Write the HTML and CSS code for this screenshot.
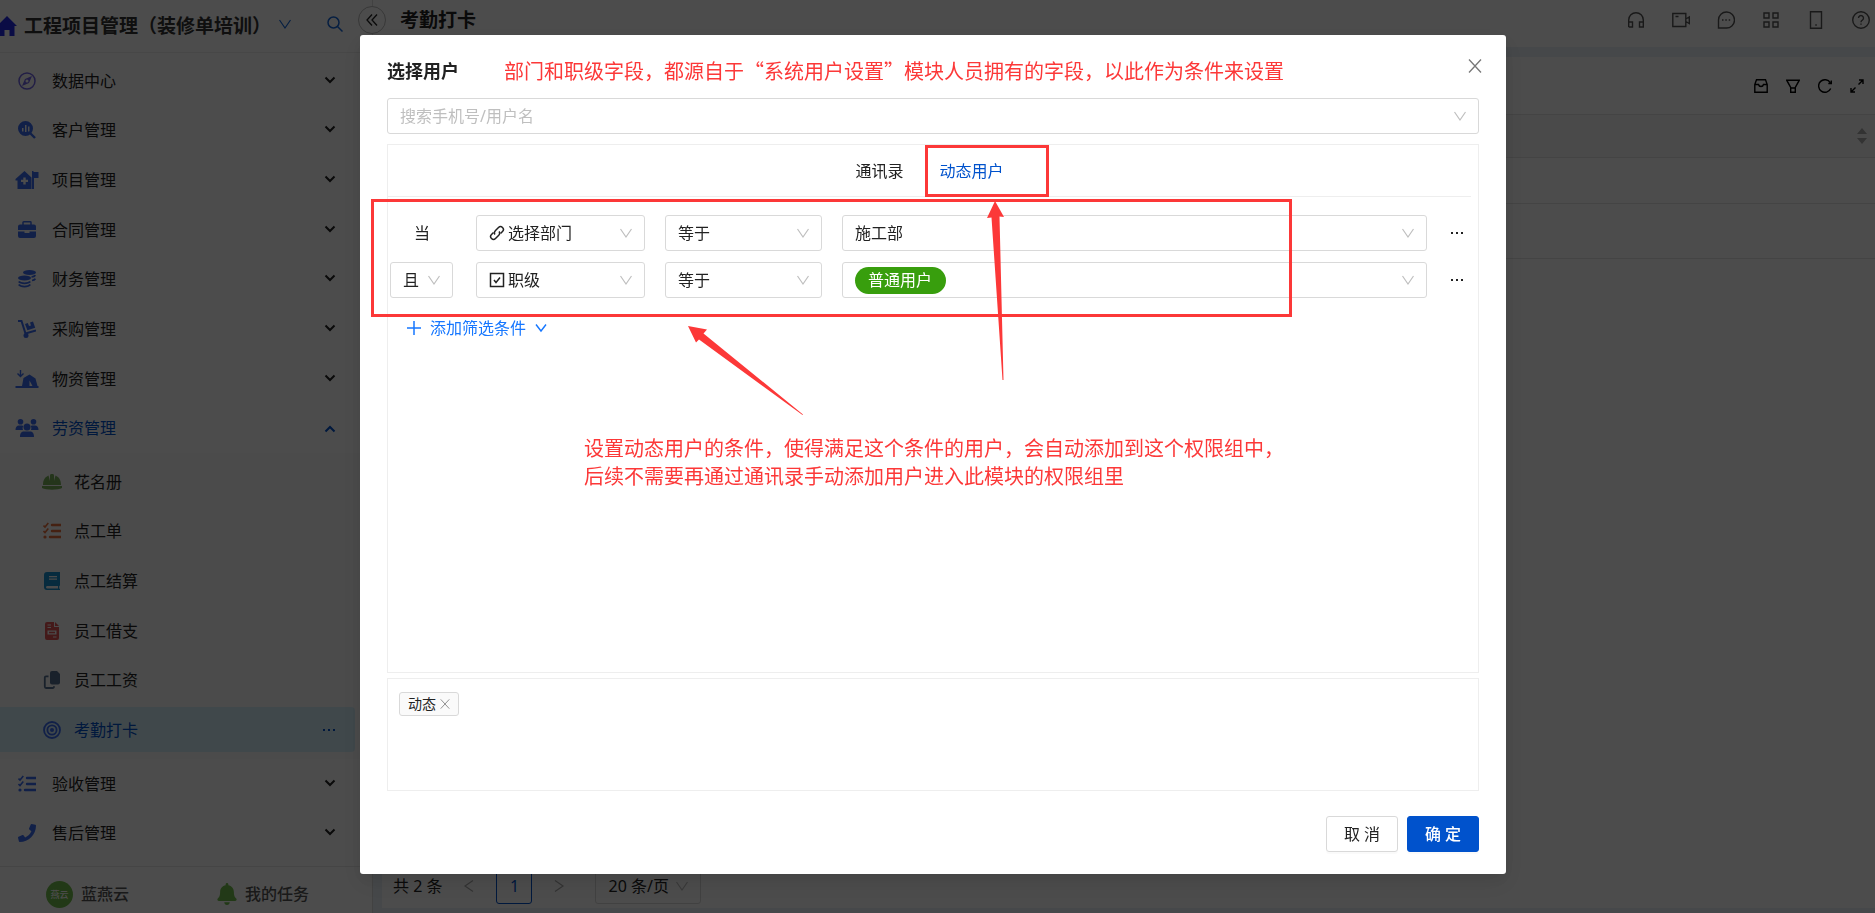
FILE: index.html
```html
<!DOCTYPE html>
<html lang="zh-CN">
<head>
    <meta charset="UTF-8">
    <meta name="viewport" content="width=device-width, initial-scale=1.0">
    <title>考勤打卡</title>
    <link rel="stylesheet" href="styles.css">
</head>
<body>
    <!-- Shared icons -->
    <svg class="sprite" aria-hidden="true">
        <symbol id="down" viewBox="0 0 14 14"><path d="M1.5 3L7 11l5.500-8" fill="none" stroke="currentColor" stroke-width="1.200"/></symbol>
        <symbol id="caret" viewBox="0 0 12 12"><path d="M1.500 2.500L6 7l4.500-4.500" fill="none" stroke="currentColor" stroke-width="2"/></symbol>
        <symbol id="close" viewBox="0 0 14 14"><path d="M1 .5l12 13M13 .5l-12 13" fill="none" stroke="currentColor" stroke-width="1.300"/></symbol>
        <symbol id="dots" viewBox="0 0 14 14"><path d="M1 6h2v2H1zM6 6h2v2H6zM11 6h2v2h-2z" fill="currentColor"/></symbol>
        <symbol id="tasks" viewBox="0 0 18 18"><g fill="none" stroke="currentColor"><path d="M.5 3.500L2 5l3.300-4M.5 9L2 10.500l3.300-4" stroke-width="1.600"/><path d="M9 3h8.500M9 9h8.500M7 15h10.500" stroke-width="2.400" stroke-linecap="round"/></g><circle cx="2" cy="15" r="1.600" fill="currentColor"/></symbol>
    </svg>

    <div class="app">
        <!-- Sidebar -->
        <aside class="sidebar">
            <div class="sidebar-header">
                <svg class="home" viewBox="0 0 20 20"><path d="M10 0l10 10h-2.500v10h-5v-6h-5v6h-5V10H0z" fill="currentColor"/></svg>
                <h1>工程项目管理（装修单培训）</h1>
                <button class="icon-btn project" aria-label="切换项目"><svg class="i14"><use href="#down"/></svg></button>
                <button class="icon-btn search" aria-label="搜索"><svg class="i16" viewBox="0 0 16 16" fill="none" stroke="currentColor" stroke-width="1.500"><circle cx="6.500" cy="6.500" r="5.500"/><path d="M10.500 10.500L15.500 15.500"/></svg></button>
            </div>
            <ul class="menu">
                <li>
                    <a href="#" class="item">
                        <svg class="icon purple" viewBox="0 0 18 18"><circle cx="9" cy="9" r="8" fill="none" stroke="currentColor" stroke-width="1.500"/><path fill-rule="evenodd" d="M14 4l-3 7-7 3 3-7zM9 7.500a1.500 1.500 0 1 0 0 3 1.500 1.500 0 0 0 0-3z" fill="currentColor"/></svg>
                        <span>数据中心</span><svg class="i12"><use href="#caret"/></svg>
                    </a>
                </li>
                <li>
                    <a href="#" class="item">
                        <svg class="icon" viewBox="0 0 18 18"><path d="M11 11l6 6" stroke="currentColor" stroke-width="2.400"/><path fill-rule="evenodd" d="M7.500 0a7.500 7.500 0 1 0 0 15 7.500 7.500 0 0 0 0-15zM4 7h1.500v3.500H4zM7 4h1.500v7H7zM10 5.500h1.500v5H10z" fill="currentColor"/></svg>
                        <span>客户管理</span><svg class="i12"><use href="#caret"/></svg>
                    </a>
                </li>
                <li>
                    <a href="#" class="item">
                        <svg class="icon wide" viewBox="0 0 23 18"><path fill-rule="evenodd" d="M9 0l7 6.500V18H2V9.500H0V8zM7.800 6.500v2.200H5.500v2.400h2.300v2.300h2.400v-2.300h2.300V8.700h-2.300V6.500zM16.500 0h1.500v1h5v6h-4.500v11h-2z" fill="currentColor"/></svg>
                        <span>项目管理</span><svg class="i12"><use href="#caret"/></svg>
                    </a>
                </li>
                <li>
                    <a href="#" class="item">
                        <svg class="icon" viewBox="0 0 18 18"><path d="M5 4V1.500Q5 .8 5.700.8h6.600q.7 0 .7.700V4" fill="none" stroke="currentColor" stroke-width="1.500"/><path d="M2 3.500h14a2 2 0 0 1 2 2V9H0V5.500a2 2 0 0 1 2-2zM0 10.500h6.500v1.500h5v-1.500H18V15a2 2 0 0 1-2 2H2a2 2 0 0 1-2-2z" fill="currentColor"/></svg>
                        <span>合同管理</span><svg class="i12"><use href="#caret"/></svg>
                    </a>
                </li>
                <li>
                    <a href="#" class="item">
                        <svg class="icon" viewBox="0 0 18 18"><g fill="currentColor"><ellipse cx="11.500" cy="2.500" rx="6.500" ry="2.500"/><ellipse cx="6.500" cy="8" rx="6.500" ry="2.600"/></g><path d="M.7 11.500c2 2.400 9.600 2.400 11.600 0M.7 14.500c2 2.800 9.600 2.800 11.600 0M13.500 7q3-.4 3.800-1.800M14 10.500q2.600-.4 3.300-1.800" fill="none" stroke="currentColor" stroke-width="1.700"/></svg>
                        <span>财务管理</span><svg class="i12"><use href="#caret"/></svg>
                    </a>
                </li>
                <li>
                    <a href="#" class="item">
                        <svg class="icon" viewBox="0 0 18 18"><path d="M0 1h3.500l4 12.500L18 10.500" fill="none" stroke="currentColor" stroke-width="2"/><circle cx="8" cy="15.500" r="2.500" fill="currentColor"/><path d="M7 4l2.800-.9 1.200 3 2-.6-1-3L15 1.500l2.200 6.300-7.800 2.400z" fill="currentColor"/></svg>
                        <span>采购管理</span><svg class="i12"><use href="#caret"/></svg>
                    </a>
                </li>
                <li>
                    <a href="#" class="item">
                        <svg class="icon wide" viewBox="0 0 23 18"><path d="M5 0v6M2 3.500L5 6.500l3-3" fill="none" stroke="currentColor" stroke-width="1.400"/><path fill-rule="evenodd" d="M6.500 16l1.500-8 6-3.500 6 4 2 7.500h1v2H0v-2zM14 10.500v5.500h3z" fill="currentColor"/></svg>
                        <span>物资管理</span><svg class="i12"><use href="#caret"/></svg>
                    </a>
                </li>
                <li class="group">
                    <a href="#" class="item active">
                        <svg class="icon wide" viewBox="0 0 23 18"><g fill="currentColor"><circle cx="5" cy="2.800" r="2.800"/><circle cx="18" cy="2.800" r="2.800"/><circle cx="11.500" cy="8" r="3.500"/><path d="M0 11c0-3 1.300-4.500 3.500-4.500h3q.7 0 1.300.5Q6.400 9 7.500 11zM23 11c0-3-1.300-4.500-3.500-4.500h-3q-.7 0-1.300.5 1.400 2 .3 4zM4.500 18c0-4 1.500-5.500 4-5.500h6c2.500 0 4 1.500 4 5.500z"/></g></svg>
                        <span>劳资管理</span><svg class="i12 up"><use href="#caret"/></svg>
                    </a>
                    <ul class="submenu">
                        <li>
                            <a href="#" class="item">
                                <svg class="icon wide green" viewBox="0 0 20 18"><path d="M1 12c0-5 2-8 5.500-9.500L8 8V2.500Q8 1 9 1h2q1 0 1 1.500V8l1.500-5.500C17 4 19 7 19 12zM0 13h20v2c-4 2.300-16 2.300-20 0z" fill="currentColor"/></svg>
                                <span>花名册</span>
                            </a>
                        </li>
                        <li>
                            <a href="#" class="item">
                                <svg class="icon orange"><use href="#tasks"/></svg>
                                <span>点工单</span>
                            </a>
                        </li>
                        <li>
                            <a href="#" class="item">
                                <svg class="icon teal" viewBox="0 0 18 18"><path fill-rule="evenodd" d="M4 0h13v13.500l-.8.500v2.500l.8.500v1H4a3 3 0 0 1-3-3V3a3 3 0 0 1 3-3zM6 4v1.200h8V4zm0 2.500v1.200h8V6.500zM4 14q-1 .2-1 1.200t1 1.200h11V14z" fill="currentColor"/></svg>
                                <span>点工结算</span>
                            </a>
                        </li>
                        <li>
                            <a href="#" class="item">
                                <svg class="icon red" viewBox="0 0 18 18"><path fill-rule="evenodd" d="M4 0h7v5h5v11a2 2 0 0 1-2 2H4a2 2 0 0 1-2-2V2a2 2 0 0 1 2-2zM4.500 2.500v1H8v-1zm0 2.500v1H8V5zM4.500 8.500v4h9v-4zM6 9.800h6v1.500H6zm4 4.700v1h3.500v-1zM12 0l4 4h-4z" fill="currentColor"/></svg>
                                <span>员工借支</span>
                            </a>
                        </li>
                        <li>
                            <a href="#" class="item">
                                <svg class="icon slate" viewBox="0 0 18 18"><path d="M9 0h5l3 3v8.500a2 2 0 0 1-2 2H9a2 2 0 0 1-2-2V2a2 2 0 0 1 2-2z" fill="currentColor"/><path d="M5.500 5.300H3q-1.200 0-1.200 1.200v9q0 1.500 1.200 1.500h6.500q1.500 0 1.500-1.800" fill="none" stroke="currentColor" stroke-width="1.800"/></svg>
                                <span>员工工资</span>
                            </a>
                        </li>
                        <li>
                            <a href="#" class="item active selected">
                                <svg class="icon" viewBox="0 0 18 18"><g fill="none" stroke="currentColor" stroke-width="1.800"><circle cx="9" cy="9" r="8"/><circle cx="9" cy="9" r="4.600"/></g><circle cx="9" cy="9" r="2" fill="currentColor"/></svg>
                                <span>考勤打卡</span><svg class="i14"><use href="#dots"/></svg>
                            </a>
                        </li>
                    </ul>
                </li>
                <li>
                    <a href="#" class="item">
                        <svg class="icon"><use href="#tasks"/></svg>
                        <span>验收管理</span><svg class="i12"><use href="#caret"/></svg>
                    </a>
                </li>
                <li>
                    <a href="#" class="item">
                        <svg class="icon" viewBox="0 0 512 512"><path d="M493.400 24.600l-104-24c-11.300-2.600-22.900 3.300-27.500 13.900l-48 112c-4.200 9.800-1.400 21.300 6.900 28l60.600 49.600c-36 76.700-98.900 140.500-177.200 177.200l-49.600-60.600c-6.800-8.300-18.200-11.100-28-6.900l-112 48C3.900 366.500-2 378.100.6 389.400l24 104C27.100 504.200 36.700 512 48 512c256.100 0 464-207.500 464-464 0-11.200-7.700-20.900-18.600-23.400z" fill="currentColor"/></svg>
                        <span>售后管理</span><svg class="i12"><use href="#caret"/></svg>
                    </a>
                </li>
            </ul>
            <div class="sidebar-footer">
                <a href="#"><span class="avatar">燕云</span>蓝燕云</a>
                <a href="#"><svg class="bell" viewBox="0 0 448 512"><path d="M224 512c35.320 0 63.970-28.650 63.970-64H160.030c0 35.350 28.650 64 63.970 64zm215.390-149.710c-19.320-20.760-55.470-51.990-55.470-154.290 0-77.700-54.480-139.900-127.940-155.160V32c0-17.670-14.320-32-31.980-32s-31.980 14.330-31.980 32v20.840C118.560 68.100 64.080 130.300 64.080 208c0 102.300-36.150 133.530-55.470 154.290-6 6.450-8.660 14.160-8.610 21.710.11 16.400 12.980 32 32.100 32h383.800c19.120 0 32-15.600 32.100-32 .05-7.550-2.610-15.270-8.610-21.710z" fill="currentColor"/></svg>我的任务</a>
            </div>
        </aside>

        <!-- Page behind the dialog -->
        <main class="main">
            <header class="topbar">
                <button class="collapse" aria-label="收起菜单"><svg class="i14" viewBox="0 0 14 14"><path d="M7 1.500L2 7l5 5.500M12 1.500L7 7l5 5.500" fill="none" stroke="currentColor" stroke-width="1.300"/></svg></button>
                <h2>考勤打卡</h2>
                <div class="top-icons">
                    <button class="icon-btn" aria-label="客服"><svg class="i18" viewBox="0 0 18 18"><path d="M1.700 16V9a7.300 7.300 0 0 1 14.600 0v7h-3.800v-5h3.800M1.700 11h3.800v5H1.700"/></svg></button>
                    <button class="icon-btn" aria-label="视频"><svg class="i18" viewBox="0 0 18 18"><path d="M.8 2.500h13v13H.8zM3.500 5.500h3M13.800 8l3.500-2v6.500l-3.500-2"/></svg></button>
                    <button class="icon-btn" aria-label="消息"><svg class="i18" viewBox="0 0 18 18"><path d="M1.500 16.500v-7.500A8 8 0 1 1 9 17H1.500zM5 9h1.500M8.300 9h1.500M11.700 9h1.500"/></svg></button>
                    <button class="icon-btn" aria-label="应用"><svg class="i18" viewBox="0 0 18 18"><path d="M2 2h5v5H2zM11 2h5v5h-5zM2 11h5v5H2zM11 11h5v5h-5z"/></svg></button>
                    <button class="icon-btn" aria-label="手机端"><svg class="i18" viewBox="0 0 18 18"><path d="M3.500.8h11v16.400h-11zM8.300 14h1.500"/></svg></button>
                    <button class="icon-btn" aria-label="帮助"><svg class="i18" viewBox="0 0 18 18"><circle cx="9" cy="9" r="8.300"/><path d="M6.500 7a2.500 2.500 0 1 1 3.800 2.100Q9 9.800 9 11.200M9 12.500v1.300"/></svg></button>
                </div>
            </header>
            <section class="card">
                <div class="toolbar">
                    <button class="icon-btn" aria-label="归档"><svg class="i14" viewBox="0 0 14 14"><path d="M.8 5.500L2.500.8h9l1.700 4.700v7.700H.8zM.8 5.500h3.700q.5 2 2.500 2t2.500-2h3.700"/></svg></button>
                    <button class="icon-btn" aria-label="筛选"><svg class="i14" viewBox="0 0 14 14"><path d="M.7 1.200h12.600L9.300 8.500v4.800H4.700V8.500zM4.700 9h4.600"/></svg></button>
                    <button class="icon-btn" aria-label="刷新"><svg class="i14" viewBox="0 0 14 14"><path d="M12.700 9.500A6.300 6.300 0 1 1 12.300 3.700M13.300 1.500v3h-3"/></svg></button>
                    <button class="icon-btn" aria-label="全屏"><svg class="i14" viewBox="0 0 14 14"><path d="M8.500 5.500L12.500 1.500M9 1h4v4M5.500 8.500L1.500 12.500M1 9v4h4"/></svg></button>
                </div>
                <table class="grid">
                    <thead><tr><th><svg class="sort" viewBox="0 0 10 16"><path d="M0 6l5-6 5 6zM0 10l5 6 5-6z" fill="currentColor"/></svg></th></tr></thead>
                    <tbody><tr><td></td></tr><tr class="tall"><td></td></tr></tbody>
                </table>
                <div class="pagination">
                    <span>共 2 条</span>
                    <button class="icon-btn pager prev" aria-label="上一页"><svg class="i14"><use href="#down"/></svg></button>
                    <button class="page">1</button>
                    <button class="icon-btn pager next" aria-label="下一页"><svg class="i14"><use href="#down"/></svg></button>
                    <div class="field page-size">
                        <select aria-label="每页条数"><option>20 条/页</option></select>
                        <svg class="i14"><use href="#down"/></svg>
                    </div>
                </div>
            </section>
        </main>
    </div>

    <!-- Select user dialog -->
    <div class="mask">
        <div class="modal" role="dialog" aria-labelledby="dialogTitle">
            <div class="modal-header">
                <h2 id="dialogTitle">选择用户</h2>
                <p class="note">部门和职级字段，都源自于“系统用户设置”模块人员拥有的字段，以此作为条件来设置</p>
                <button class="icon-btn close" aria-label="关闭"><svg class="i14"><use href="#close"/></svg></button>
            </div>
            <div class="field">
                <input type="text" aria-label="搜索用户" placeholder="搜索手机号/用户名">
                <svg class="i14"><use href="#down"/></svg>
            </div>

            <div class="panel conditions">
                <div class="tabs" role="tablist">
                    <button class="tab" role="tab">通讯录</button>
                    <button class="tab current" role="tab" aria-selected="true">动态用户</button>
                </div>
                <div class="rules">
                    <div class="rule">
                        <span class="when">当</span>
                        <div class="field">
                            <svg class="lead" viewBox="0 0 16 16"><g fill="none" stroke="currentColor" stroke-width="1.500"><path d="M6 9.500Q4.500 7.500 6.500 5.500L9.500 2.500a2.800 2.800 0 0 1 4 4L11.500 8.500"/><path d="M10 6.500Q11.500 8.500 9.500 10.500L6.500 13.500a2.800 2.800 0 0 1-4-4L4.500 7.500"/></g></svg>
                            <select aria-label="条件字段"><option>选择部门</option></select>
                            <svg class="i14"><use href="#down"/></svg>
                        </div>
                        <div class="field">
                            <select aria-label="比较方式"><option>等于</option></select>
                            <svg class="i14"><use href="#down"/></svg>
                        </div>
                        <div class="field">
                            <select aria-label="条件值"><option>施工部</option></select>
                            <svg class="i14"><use href="#down"/></svg>
                        </div>
                        <button class="icon-btn more" aria-label="更多"><svg class="i14"><use href="#dots"/></svg></button>
                    </div>
                    <div class="rule">
                        <div class="field join">
                            <select aria-label="关系"><option>且</option></select>
                            <svg class="i14"><use href="#down"/></svg>
                        </div>
                        <div class="field">
                            <svg class="lead" viewBox="0 0 16 16"><path d="M1.500 1.500h13v13h-13zM5 8l2 2.500L11 5.500" fill="none" stroke="currentColor" stroke-width="1.500"/></svg>
                            <select aria-label="条件字段"><option>职级</option></select>
                            <svg class="i14"><use href="#down"/></svg>
                        </div>
                        <div class="field">
                            <select aria-label="比较方式"><option>等于</option></select>
                            <svg class="i14"><use href="#down"/></svg>
                        </div>
                        <div class="field">
                            <select class="pill" aria-label="条件值"><option>普通用户</option></select>
                            <svg class="i14"><use href="#down"/></svg>
                        </div>
                        <button class="icon-btn more" aria-label="更多"><svg class="i14"><use href="#dots"/></svg></button>
                    </div>
                </div>
                <button class="add">
                    <svg class="i14" viewBox="0 0 14 14"><path d="M7 0v14M0 7h14" stroke="currentColor" stroke-width="1.500"/></svg>
                    添加筛选条件
                    <svg class="i12" viewBox="0 0 12 12"><path d="M1 2.500l5 6.500 5-6.500" fill="none" stroke="currentColor" stroke-width="1.400"/></svg>
                </button>
            </div>

            <div class="panel chosen">
                <span class="tag">动态<button class="icon-btn" aria-label="移除"><svg class="i10"><use href="#close"/></svg></button></span>
            </div>

            <div class="modal-footer">
                <button class="btn">取 消</button>
                <button class="btn primary">确 定</button>
            </div>

            <!-- Red marks drawn over the dialog -->
            <div class="mark mark-tab"></div>
            <div class="mark mark-rules"></div>
            <svg class="arrow arrow-tab" viewBox="0 0 18 180"><path d="M8 0L17 16 12.500 15.500 16.500 179H15.500L4.500 16.500 0 17z"/></svg>
            <svg class="arrow arrow-rules" viewBox="0 0 116 90"><path d="M0 0L19 3.500 15.500 7.500 115 88.500 114.500 89 11 13.500 8 16.500z"/></svg>
            <p class="note note-rules">设置动态用户的条件，使得满足这个条件的用户，会自动添加到这个权限组中，<br>后续不需要再通过通讯录手动添加用户进入此模块的权限组里</p>
        </div>
    </div>
</body>
</html>
```
FILE: styles.css
```css
* {
    box-sizing: border-box;
}

body {
    margin: 0;
    height: 100vh;
    overflow: hidden;
    font-family: "Noto Sans", "Noto Sans CJK SC", sans-serif;
    font-size: 16px;
    line-height: 24px;
    color: #222;
}

h1, h2, p, ul {
    margin: 0;
    padding: 0;
}

ul {
    list-style: none;
}

a {
    color: inherit;
    text-decoration: none;
}

button, input, select {
    font: inherit;
    color: inherit;
    border: none;
    background: none;
    padding: 0;
    margin: 0;
    outline: none;
    appearance: none;
}

button, select {
    cursor: pointer;
}

svg {
    display: block;
    flex: none;
}

.sprite {
    position: absolute;
    width: 0;
    height: 0;
}

.i10 { width: 10px; height: 10px; }
.i12 { width: 12px; height: 12px; }
.i14 { width: 14px; height: 14px; }
.i16 { width: 16px; height: 16px; }
.i18 { width: 18px; height: 18px; }

.icon-btn {
    display: flex;
    align-items: center;
    justify-content: center;
}

.app {
    display: flex;
    height: 100vh;
    background: #eaf0f8;
}

/* Sidebar */
.sidebar {
    width: 373px;
    flex: none;
    display: flex;
    flex-direction: column;
    background: #fff;
    border-right: 1px solid #ddd;
}

.sidebar-header {
    height: 53px;
    display: flex;
    align-items: center;
    border-bottom: 1px solid #eee;
}

.sidebar-header h1 {
    font-size: 19px;
    margin-left: 7px;
    color: #333;
    white-space: nowrap;
}

.home {
    width: 20px;
    height: 20px;
    margin-left: -3px;
    color: #2229e8;
}

.project, .search {
    color: #1668dc;
    padding-bottom: 4px;
}

.project {
    margin-left: 7px;
}

.search {
    margin-left: 35px;
}

.menu {
    flex: 1;
    display: flex;
    flex-direction: column;
    padding: 3px 0 8px;
}

.menu li {
    flex: 1 1 0;
    display: flex;
    flex-direction: column;
    justify-content: center;
}

.menu .group {
    flex: 7 7 8px;
}

.group > .item {
    flex: 1 1 0;
}

.submenu {
    flex: 6 6 8px;
    display: flex;
    flex-direction: column;
    padding: 4px 0;
    background: #fafafa;
}

.item {
    display: flex;
    align-items: center;
    min-height: 45px;
    padding: 0 19px 0 18px;
    margin-right: 17px;
    border-radius: 0 4px 4px 0;
}

.submenu .item {
    padding-left: 43px;
}

.item span {
    flex: 1;
    margin-left: 16px;
}

.submenu .item span {
    margin-left: 13px;
}

.icon {
    width: 18px;
    height: 18px;
    color: #3b6cf0;
}

.wide {
    width: 24px;
    margin: 0 -3px;
}

.purple { color: #7265e6; }
.green { color: #7bb35c; }
.orange { color: #e8713c; }
.teal { color: #1890d0; }
.red { color: #e35454; }
.slate { color: #56708f; }

.active {
    color: #0052cc;
}

.selected {
    background: #d6f1fc;
}

.up {
    transform: rotate(180deg);
}

.sidebar-footer {
    height: 47px;
    display: flex;
    align-items: center;
    border-top: 1px solid #e8e8e8;
    padding: 8px 0 0 46px;
    gap: 88px;
    color: #555;
    font-weight: 500;
}

.sidebar-footer a {
    display: flex;
    align-items: center;
    gap: 8px;
}

.avatar {
    width: 27px;
    height: 27px;
    line-height: 27px;
    border-radius: 50%;
    background: #73c04d;
    color: #fff;
    font-size: 9px;
    text-align: center;
}

.bell {
    width: 20px;
    height: 22px;
    color: #73c04d;
}

/* Main page */
.main {
    flex: 1;
    display: flex;
    flex-direction: column;
    padding-bottom: 5px;
}

.topbar {
    height: 47px;
    display: flex;
    align-items: center;
    padding: 0 5px 7px 0;
    background: #fff;
}

.topbar h2 {
    font-size: 19px;
    margin-left: 14px;
}

.collapse {
    width: 28px;
    height: 28px;
    margin-left: -15px;
    z-index: 1;
    display: flex;
    align-items: center;
    justify-content: center;
    border: 1px solid #bbb;
    border-radius: 50%;
    background: #fff;
}

.top-icons, .toolbar {
    display: flex;
    margin-left: auto;
}

.top-icons {
    gap: 27px;
    color: #555;
}

.top-icons svg, .toolbar svg {
    fill: none;
    stroke: currentColor;
    stroke-width: 1.4;
}

.card {
    flex: 1;
    display: flex;
    flex-direction: column;
    margin: 10px 0 0 9px;
    background: #fff;
}

.toolbar {
    height: 57px;
    gap: 18px;
    padding-right: 11px;
    color: #000;
}

.grid {
    width: 100%;
    border-collapse: collapse;
}

.grid th, .grid td {
    height: 46px;
    padding: 0 8px 0 0;
    border-bottom: 1px solid #e4e4e4;
}

.grid th {
    height: 43px;
    background: #f8f8f8;
    border-top: 1px solid #e4e4e4;
}

.grid .tall td {
    height: 55px;
}

.sort {
    width: 10px;
    height: 16px;
    margin-left: auto;
    color: #aaa;
}

.pagination {
    display: flex;
    align-items: center;
    margin-top: auto;
    padding: 0 0 4px 11px;
}

.pager {
    width: 54px;
    color: #aaa;
}

.prev svg {
    transform: rotate(90deg);
}

.next svg {
    transform: rotate(-90deg);
}

.page {
    width: 36px;
    height: 36px;
    border: 1px solid #0052cc;
    border-radius: 3px;
    color: #0052cc;
}

.page-size {
    width: 106px;
    margin-left: 9px;
}

/* Dialog */
.mask {
    position: fixed;
    inset: 0;
    z-index: 10;
    display: flex;
    padding: 35px 369px 39px 360px;
    background: rgba(0, 0, 0, 0.7);
}

.modal {
    position: relative;
    flex: 1;
    display: flex;
    flex-direction: column;
    padding: 0 27px 22px;
    border-radius: 3px;
    background: #fff;
    box-shadow: 0 6px 16px rgba(0, 0, 0, 0.08), 0 9px 28px 8px rgba(0, 0, 0, 0.05);
}

.modal-header {
    height: 63px;
    display: flex;
    align-items: center;
    padding-top: 9px;
}

.modal-header h2 {
    font-size: 18px;
    margin-right: 45px;
    white-space: nowrap;
}

.note {
    font-family: "Noto Sans CJK SC", sans-serif;
    font-size: 20px;
    line-height: 28px;
    color: #fc3838;
    white-space: nowrap;
}

.close {
    width: 14px;
    margin: 0 -3px 10px auto;
    color: #777;
}

.field {
    height: 36px;
    min-width: 0;
    display: flex;
    align-items: center;
    justify-content: space-between;
    padding: 0 11px 0 12px;
    border: 1px solid #d9d9d9;
    border-radius: 3px;
    color: #222;
}

.field input, .field select {
    flex: 1;
    min-width: 0;
    height: 34px;
}

.field input::placeholder {
    color: #bfbfbf;
}

.field > .i14 {
    color: #bfbfbf;
}

.lead {
    width: 16px;
    height: 16px;
    margin-right: 3px;
}

.field .pill {
    flex: none;
    height: 27px;
    padding: 0 13px;
    border-radius: 14px;
    background: #389e0d;
    color: #fff;
}

.panel {
    border: 1px solid #eee;
}

.conditions {
    flex: 1;
    margin-top: 10px;
}

.tabs {
    height: 52px;
    display: flex;
    justify-content: center;
    gap: 36px;
    margin-right: 7px;
    border-bottom: 1px solid #eee;
}

.current {
    color: #0052cc;
}

.rules {
    display: flex;
    flex-direction: column;
    gap: 11px;
    padding: 18px 11px 0 2px;
}

.rule {
    display: grid;
    grid-template-columns: 66px 169px 157px 1fr 20px;
    column-gap: 20px;
    align-items: center;
}

.when {
    padding-left: 24px;
}

.join {
    width: 63px;
}

.add {
    display: flex;
    align-items: center;
    gap: 9px;
    margin: 18px 0 0 19px;
    color: #1677ff;
}

.chosen {
    height: 113px;
    margin-top: 5px;
    padding: 12px 11px;
}

.tag {
    display: inline-flex;
    align-items: center;
    gap: 4px;
    height: 24px;
    padding: 0 8px;
    border: 1px solid #d9d9d9;
    border-radius: 3px;
    background: #fafafa;
    font-size: 14px;
}

.tag button {
    color: #888;
}

.modal-footer {
    display: flex;
    justify-content: flex-end;
    gap: 9px;
    margin-top: 25px;
}

.btn {
    width: 72px;
    height: 36px;
    border: 1px solid #d9d9d9;
    border-radius: 3px;
    box-shadow: 0 2px 0 rgba(0, 0, 0, 0.02);
}

.primary {
    border-color: #0052cc;
    background: #0052cc;
    color: #fff;
    font-weight: 500;
}

/* Annotations */
.mark {
    position: absolute;
    border: 3px solid #fc3838;
    pointer-events: none;
}

.mark-tab {
    top: 110px;
    left: 565px;
    width: 124px;
    height: 52px;
}

.mark-rules {
    top: 164px;
    left: 11px;
    width: 921px;
    height: 118px;
}

.arrow {
    position: absolute;
    fill: #fc3838;
}

.arrow-tab {
    top: 166px;
    left: 627px;
    width: 18px;
    height: 180px;
}

.arrow-rules {
    top: 291px;
    left: 328px;
    width: 116px;
    height: 90px;
}

.note-rules {
    position: absolute;
    top: 399px;
    left: 224px;
}
```
